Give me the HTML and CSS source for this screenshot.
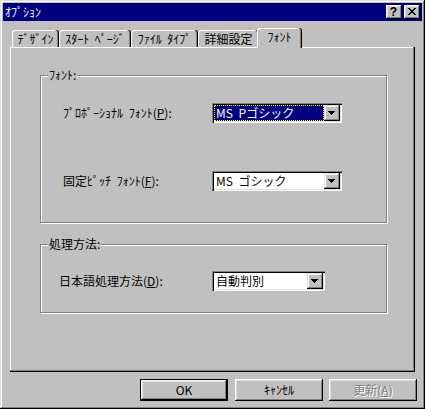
FILE: index.html
```html
<!DOCTYPE html>
<html lang="ja">
<head>
<meta charset="utf-8">
<title>ｵﾌﾟｼｮﾝ</title>
<link rel="stylesheet" href="styles.css">
</head>
<body>
<div class="window">
  <div class="titlebar">
    <span class="title">ｵﾌﾟｼｮﾝ</span>
    <div class="caption-buttons">
      <div class="cap-btn cap-help">?</div>
      <div class="cap-btn">
        <svg width="8" height="7" viewBox="0 0 8 7" shape-rendering="crispEdges">
          <path d="M0 0h2v1h-2zM6 0h2v1h-2zM1 1h2v1h-2zM5 1h2v1h-2zM2 2h4v1h-4zM3 3h2v1h-2zM2 4h4v1h-4zM1 5h2v1h-2zM5 5h2v1h-2zM0 6h2v1h-2zM6 6h2v1h-2z" fill="#000"/>
        </svg>
      </div>
    </div>
  </div>

  <div class="tabs">
    <div class="tab tab-design">ﾃﾞｻﾞｲﾝ</div>
    <div class="tab tab-start">ｽﾀｰﾄ ﾍﾟｰｼﾞ</div>
    <div class="tab tab-file">ﾌｧｲﾙ ﾀｲﾌﾟ</div>
    <div class="tab tab-detail">詳細設定</div>
    <div class="tab tab-active">ﾌｫﾝﾄ</div>
  </div>

  <div class="panel">
    <div class="group group-font">
      <span class="legend">ﾌｫﾝﾄ:</span>
      <label class="field-label">ﾌﾟﾛﾎﾟｰｼｮﾅﾙ ﾌｫﾝﾄ(<u>P</u>):</label>
      <div class="combo">
        <div class="combo-field"><span class="combo-sel">MS Pゴシック</span></div>
        <div class="combo-drop">
          <svg width="7" height="4" viewBox="0 0 7 4" shape-rendering="crispEdges"><path d="M0 0h7v1h-7zM1 1h5v1h-5zM2 2h3v1h-3zM3 3h1v1h-1z" fill="#000"/></svg>
        </div>
      </div>
      <label class="field-label">固定ﾋﾟｯﾁ ﾌｫﾝﾄ(<u>F</u>):</label>
      <div class="combo">
        <div class="combo-field"><span class="combo-text">MS ゴシック</span></div>
        <div class="combo-drop">
          <svg width="7" height="4" viewBox="0 0 7 4" shape-rendering="crispEdges"><path d="M0 0h7v1h-7zM1 1h5v1h-5zM2 2h3v1h-3zM3 3h1v1h-1z" fill="#000"/></svg>
        </div>
      </div>
    </div>

    <div class="group group-proc">
      <span class="legend">処理方法:</span>
      <label class="field-label">日本語処理方法(<u>D</u>):</label>
      <div class="combo">
        <div class="combo-field"><span class="combo-text">自動判別</span></div>
        <div class="combo-drop">
          <svg width="7" height="4" viewBox="0 0 7 4" shape-rendering="crispEdges"><path d="M0 0h7v1h-7zM1 1h5v1h-5zM2 2h3v1h-3zM3 3h1v1h-1z" fill="#000"/></svg>
        </div>
      </div>
    </div>
  </div>

  <div class="buttons">
    <div class="btn btn-default">OK</div>
    <div class="btn">ｷｬﾝｾﾙ</div>
    <div class="btn btn-disabled">更新(<u>A</u>)</div>
  </div>
</div>
</body>
</html>
```

FILE: styles.css
```css
html, body {
  margin: 0;
  padding: 0;
  background: #c0c0c0;
}

body {
  font-family: "Noto Sans CJK JP", "Liberation Sans", sans-serif;
  font-size: 12px;
  line-height: 14px;
  word-spacing: 3px;
  color: #000;
}

.window {
  width: 425px;
  height: 409px;
  box-sizing: border-box;
  padding: 3px 3px 8px 3px;
  background: #c0c0c0;
  box-shadow: inset -1px -1px #000, inset 1px 1px #dfdfdf, inset -2px -2px #808080, inset 2px 2px #fff;
  display: flex;
  flex-direction: column;
}

/* Title bar */
.titlebar {
  height: 18px;
  flex: none;
  background: #000080;
  color: #fff;
  display: flex;
  align-items: center;
  padding: 0 2px 0 2px;
}

.title {
  flex: 1;
  font-size: 12px;
  line-height: 14px;
}

.caption-buttons {
  display: flex;
  gap: 2px;
}

.cap-btn {
  width: 16px;
  height: 14px;
  box-sizing: border-box;
  background: #c0c0c0;
  box-shadow: inset -1px -1px #000, inset 1px 1px #fff, inset -2px -2px #808080, inset 2px 2px #dfdfdf;
  display: flex;
  align-items: center;
  justify-content: center;
  padding: 0 1px 1px 0;
  color: #000;
}

.cap-help {
  font-family: "Liberation Sans", sans-serif;
  font-weight: bold;
  font-size: 12px;
  line-height: 12px;
}

/* Tabs */
.tabs {
  flex: none;
  height: 20px;
  margin-top: 7px;
  padding-left: 9px;
  display: flex;
  align-items: flex-start;
  position: relative;
  z-index: 2;
}

.tab {
  height: 17px;
  margin-top: 2px;
  box-sizing: border-box;
  background: #c0c0c0;
  border-radius: 3px 3px 0 0;
  box-shadow: inset -1px 0 #000, inset -2px 0 #808080, inset 1px 1px #fff;
  display: flex;
  align-items: center;
  justify-content: center;
  white-space: nowrap;
  position: relative;
}

.tab-design { width: 47px; }
.tab-start  { width: 72px; }
.tab-file   { width: 67px; }
.tab-detail { width: 61px; }

.tab-active {
  width: 45px;
  height: 20px;
  margin: 0 -2px 0 -2px;
  padding-bottom: 3px;
  z-index: 3;
}

/* Panel */
.panel {
  flex: 1;
  margin: -1px 7px 0 7px;
  padding: 28px 28px 0 30px;
  box-sizing: border-box;
  box-shadow: inset -1px -1px #000, inset -2px -2px #808080, inset 1px 1px #fff;
  display: flex;
  flex-direction: column;
  gap: 21px;
  position: relative;
  z-index: 1;
}

.group {
  position: relative;
  border: 1px solid #808080;
  box-shadow: inset 1px 1px #fff, 1px 1px #fff;
  display: grid;
  align-items: center;
}

.group-font {
  padding: 27px 0 31px 22px;
  grid-template-columns: 149px 130px;
  row-gap: 48px;
}

.group-proc {
  padding: 26px 0 21px 18px;
  grid-template-columns: 153px 113px;
}

.legend {
  position: absolute;
  top: -8px;
  left: 7px;
  padding: 0 1px;
  background: #c0c0c0;
  line-height: 14px;
}

.field-label {
  white-space: nowrap;
}

/* Combo box */
.combo {
  height: 20px;
  box-sizing: border-box;
  padding: 2px;
  background: #fff;
  box-shadow: inset 1px 1px #808080, inset 2px 2px #000, inset -1px -1px #fff, inset -2px -2px #dfdfdf;
  display: flex;
}

.combo-field {
  flex: 1;
  display: flex;
  min-width: 0;
}

.combo-text {
  padding-left: 2px;
  line-height: 16px;
  white-space: nowrap;
}

.combo-sel {
  flex: 1;
  background: #000080;
  color: #fff;
  padding-left: 1px;
  line-height: 14px;
  border: 1px dotted #ffff00;
  white-space: nowrap;
}

.combo-drop {
  width: 16px;
  height: 16px;
  box-sizing: border-box;
  background: #c0c0c0;
  box-shadow: inset -1px -1px #000, inset 1px 1px #dfdfdf, inset -2px -2px #808080, inset 2px 2px #fff;
  display: flex;
  align-items: center;
  justify-content: center;
  padding: 0 1px 1px 0;
}

/* Buttons */
.buttons {
  flex: none;
  margin-top: 7px;
  padding-right: 5px;
  display: flex;
  justify-content: flex-end;
  gap: 6px;
}

.btn {
  width: 88px;
  height: 22px;
  box-sizing: border-box;
  background: #c0c0c0;
  box-shadow: inset -1px -1px #000, inset 1px 1px #fff, inset -2px -2px #808080, inset 2px 2px #dfdfdf;
  display: flex;
  align-items: center;
  justify-content: center;
  padding-bottom: 1px;
}

.btn-default {
  border: 1px solid #000;
  margin-right: 1px;
}

.btn-disabled {
  color: #808080;
  text-shadow: 1px 1px #fff;
}
```
